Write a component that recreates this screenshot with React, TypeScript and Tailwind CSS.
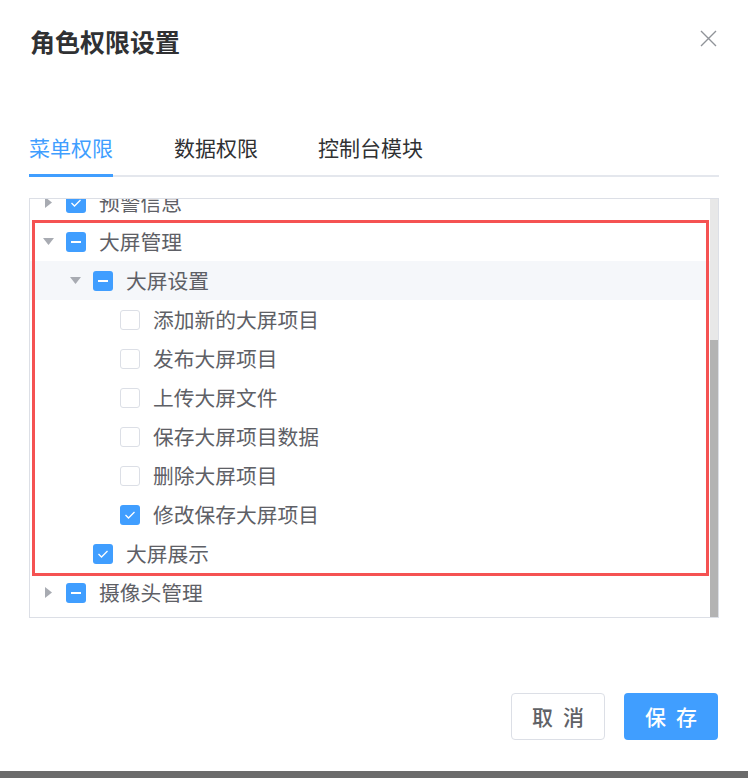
import React from "react";

type CheckState = "checked" | "unchecked" | "half";

interface TreeRow {
  label: string;
  level: number;
  state: CheckState;
  arrow?: "right" | "down";
  highlight?: boolean;
}

const rows: TreeRow[] = [
  { label: "预警信息", level: 0, state: "checked", arrow: "right" },
  { label: "大屏管理", level: 0, state: "half", arrow: "down" },
  { label: "大屏设置", level: 1, state: "half", arrow: "down", highlight: true },
  { label: "添加新的大屏项目", level: 2, state: "unchecked" },
  { label: "发布大屏项目", level: 2, state: "unchecked" },
  { label: "上传大屏文件", level: 2, state: "unchecked" },
  { label: "保存大屏项目数据", level: 2, state: "unchecked" },
  { label: "删除大屏项目", level: 2, state: "unchecked" },
  { label: "修改保存大屏项目", level: 2, state: "checked" },
  { label: "大屏展示", level: 1, state: "checked" },
  { label: "摄像头管理", level: 0, state: "half", arrow: "right" },
];

// indentation per tree level (27px each)
const indent = ["pl-[6px]", "pl-[33px]", "pl-[60px]"];

function Caret({ dir }: { dir?: "right" | "down" }) {
  if (!dir) return null;
  if (dir === "down") {
    return (
      <svg width="11" height="7" viewBox="0 0 11 7">
        <polygon points="0,0 11,0 5.5,7" fill="#a8abb2" />
      </svg>
    );
  }
  return (
    <svg width="7" height="11" viewBox="0 0 7 11">
      <polygon points="0,0 7,5.5 0,11" fill="#a8abb2" />
    </svg>
  );
}

function Checkbox({ state }: { state: CheckState }) {
  if (state === "unchecked") {
    return <span className="w-[20px] h-[20px] rounded-[3px] border border-[#dcdfe6] bg-white shrink-0" />;
  }
  return (
    <span className="w-[20px] h-[20px] rounded-[3px] bg-[#409eff] flex items-center justify-center shrink-0">
      {state === "half" ? (
        <span className="w-[10px] h-[2px] bg-white" />
      ) : (
        <svg width="20" height="20" viewBox="0 0 20 20">
          <polyline points="5.5,10 8.5,13 14.5,7" fill="none" stroke="white" strokeWidth="1.3" />
        </svg>
      )}
    </span>
  );
}

export default function App() {
  return (
    <div
      className="relative w-[748px] h-[778px] bg-white flex flex-col overflow-hidden"
      style={{ fontFamily: '"Noto Sans CJK SC", "Noto Sans", sans-serif' }}
    >
      {/* Dialog header */}
      <div className="flex items-center justify-between pl-[30px] pr-[31px] pt-[24px] h-[58px]">
        <span className="text-[25px] leading-[34px] font-bold text-[#303133]">角色权限设置</span>
        <svg width="17" height="17" viewBox="0 0 17 17" className="mb-[6px]">
          <path d="M1 1 L16 16 M16 1 L1 16" stroke="#909399" strokeWidth="1.4" />
        </svg>
      </div>

      {/* Tabs */}
      <div className="mx-[29px] mt-[62px] flex border-b-2 border-[#e4e7ed] h-[57px]">
        <div className="relative flex items-center mr-[61px] text-[21px] text-[#409eff]">
          菜单权限
          <span className="absolute left-0 right-0 -bottom-[2px] h-[3px] bg-[#409eff]" />
        </div>
        <div className="flex items-center mr-[60px] text-[21px] text-[#303133]">数据权限</div>
        <div className="flex items-center text-[21px] text-[#303133]">控制台模块</div>
      </div>

      {/* Permission tree */}
      <div className="mx-[29px] mt-[21px] h-[420px] border border-[#dcdfe6] flex">
        <div className="flex-1 overflow-hidden">
          <div className="-mt-[16px]">
            {rows.map((r) => (
              <div
                key={r.label}
                className={`flex items-center h-[39px] ${indent[r.level]} ${r.highlight ? "bg-[#f5f7fa]" : ""}`}
              >
                <span className="w-[24px] flex items-center justify-center mr-[6px]">
                  <Caret dir={r.arrow} />
                </span>
                <Checkbox state={r.state} />
                <span className="ml-[13px] text-[20.75px] text-[#5e6066] whitespace-nowrap">{r.label}</span>
              </div>
            ))}
          </div>
        </div>
        <div className="w-[8px] flex flex-col">
          <div className="h-[141px] bg-[#e8e8e8]" />
          <div className="flex-1 bg-[#b3b3b3]" />
        </div>
      </div>

      {/* Footer buttons */}
      <div className="flex justify-end gap-[19px] mr-[30px] mt-[75px]">
        <button className="w-[94px] h-[47px] rounded-[4px] border border-[#dcdfe6] bg-white text-[21px] font-medium text-[#606266] flex items-center justify-center gap-[10px]">
          <span>取</span>
          <span>消</span>
        </button>
        <button className="w-[94px] h-[47px] rounded-[4px] bg-[#409eff] text-[21px] font-medium text-white flex items-center justify-center gap-[10px]">
          <span>保</span>
          <span>存</span>
        </button>
      </div>

      <div className="mt-auto h-[7px] bg-[#6b6b6b]" />

      {/* Red annotation frame */}
      <div className="absolute left-[32px] top-[220px] w-[677px] h-[356px] border-[3px] border-[#f55252] pointer-events-none" />
    </div>
  );
}
